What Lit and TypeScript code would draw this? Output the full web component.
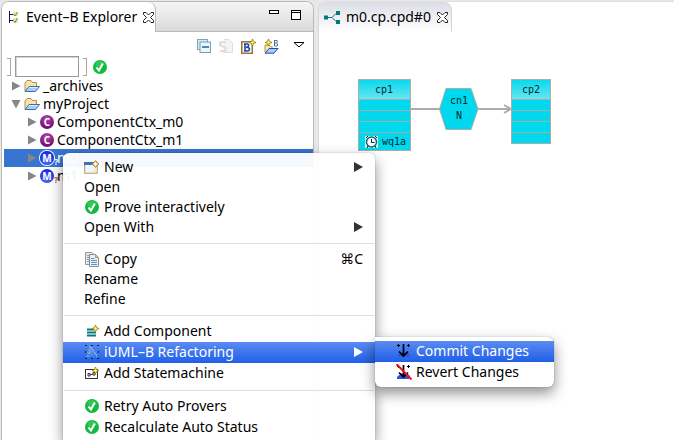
import { LitElement, html, svg, css, nothing, TemplateResult } from "lit";
import { customElement } from "lit/decorators.js";
import { classMap } from "lit/directives/class-map.js";

const icon = (w: number, h: number, body: unknown) => html`
  <svg class="ico" width=${w} height=${h} viewBox="0 0 ${w} ${h}" aria-hidden="true">${body}</svg>`;

const check = () => icon(14, 14, svg`
  <circle cx="7" cy="7" r="7" fill="#12b93c"></circle>
  <ellipse cx="7" cy="4" rx="5" ry="3" fill="#4fd46e" opacity=".5"></ellipse>
  <path d="M3.5 7.5 L6 10.5 L9.8 3.5" fill="none" stroke="#fff" stroke-width="2"></path>`);

const folder = () => icon(16, 14, svg`
  <path d="M1 12 V4 L3 1.5 H7 L8.500 3.500 H12.500 V7" fill="#f9e2ab" stroke="#b08d4f"></path>
  <path d="M1 12.500 L5 7.500 H15.500 L11.500 12.500 Z" fill="#a9cdf5" stroke="#3f6cae"></path>
  <path d="M5 8.500 H13.500" stroke="#dcedff"></path>`);

const close = () => icon(11, 11, svg`
  <path d="M.5 .5 H3 L5.500 3 L8 .5 H10.500 V2.500 L7.500 5.500 L10.500 8.500 V10.500 H8 L5.500 8 L3 10.500 H.5 V8.500 L3.500 5.500 L.5 2.500 Z"
    fill="#fff" stroke="#222"></path>`);

const star = (x: number, y: number) => svg`
  <path d="M${x} ${y - 3.5} L${x + 1} ${y - 1} L${x + 3.5} ${y} L${x + 1} ${y + 1} L${x} ${y + 3.5} L${x - 1} ${y + 1} L${x - 3.5} ${y} L${x - 1} ${y - 1} Z"
    fill="#fff45a" stroke="#8b7a12" stroke-width=".8"></path>`;

const letterBall = (letter: string, kind: string) => html`<span class="ball ${kind}">${letter}</span>`;

const explorerIcon = () => icon(12, 14, svg`
  <path d="M1.500 1 V13 M1.500 4.500 H5 M1.500 10.500 H5" fill="none" stroke="#13136b"></path>
  <rect x="5" y="2" width="5" height="4" fill="#f5dfa0"></rect>
  <rect x="5" y="8" width="5" height="5" fill="#f5dfa0"></rect>
  <path d="M5.500 4 L7 6 L9.500 2 M5.500 10.500 L7 12.500 L9.500 8" fill="none" stroke="#3faa4a"></path>`);

const diagramIcon = () => icon(16, 13, svg`
  <path d="M4 6.500 H8 L12 2.500 M8 6.500 L12 10.500" fill="none" stroke="#007b7b"></path>
  <path d="M0 4.500 H4 V8.500 H0 Z M12 0 H16 V4 H12 Z M12 9 H16 V13 H12 Z" fill="#007b7b"></path>`);

const collapseIcon = () => icon(14, 14, svg`
  <rect x=".5" y=".5" width="10" height="10" fill="#d5eaf5" stroke="#7fa3b8"></rect>
  <rect x="3" y="3" width="10.500" height="10.500" fill="#e9f7fd" stroke="#7c9cb5"></rect>
  <path d="M5 8 H12" stroke="#1d5f9c" stroke-width="1.500"></path>`);

const linkIcon = () => icon(14, 14, svg`
  <path d="M5 .5 H10 L13.500 4 V13.500 H4" fill="#f4f4f4" stroke="#dedede"></path>
  <path d="M7 3 L1 3.500 L1 6 L7 9 M1 12 L6 12 L7 9" fill="none" stroke="#dcdcdc" stroke-width="2"></path>`);

const newBIcon = () => icon(15, 15, svg`
  <rect x=".8" y="2.800" width="10.500" height="11.500" fill="#fffbea" stroke="#96753a" stroke-width="1.500"></rect>
  <path d="M4 5 V12 M3 5 H6.500 Q8 5.500 7.500 7 Q7 8.300 5 8.300 Q8.500 8.300 8.500 10 Q8.500 12 6 12 H3" fill="none" stroke="#1d46b5" stroke-width="1.600"></path>
  ${star(11.5, 3.5)}`);

const newProjectIcon = () => icon(15, 15, svg`
  <path d="M1 13 V6 H5 L7 8 H9" fill="#fbe6ae" stroke="#c09038"></path>
  <path d="M1 14.200 L5 9.500 H14 L10 14.200 Z" fill="#a8ccf7" stroke="#2c4aa0"></path>
  <path d="M10.500 1 V7 M10.500 1.500 H13 Q14 3.500 12.500 4 H10.500 M12.500 4 Q15 6.500 13 7 H10.500" fill="none" stroke="#3b7bab"></path>
  ${star(4.5, 3.5)}`);

const newIcon = () => icon(16, 14, svg`
  <rect x=".7" y="2.700" width="12.500" height="10.500" fill="#eef7fc" stroke="#ab9664" stroke-width="1"></rect>
  <rect x="0" y="2" width="10" height="3" fill="#3d77b3"></rect>
  <path d="M12 6 Q11 12 4 12.500 H12.500 Z" fill="#fbe6b8"></path>
  <path d="M11.500 .8 L14.800 4 L11.500 7.200 L8.200 4 Z" fill="#f4cf79" stroke="#a5762c"></path>
  <path d="M11.500 2 V6 M9.500 4 H13.500" stroke="#fff"></path>`);

const copyIcon = () => icon(14, 15, svg`
  <path d="M.5 .5 H7 L9.500 3 V12.500 H.5 Z" fill="#dcebf7" stroke="#a29871"></path>
  <path d="M2 3.500 H6 M2 5.500 H4 M2 7.500 H4 M2 9.500 H4" stroke="#7da1c6"></path>
  <path d="M4.500 2.500 H10.500 L13.500 5.500 V14.500 H4.500 Z" fill="#e8f3fb" stroke="#8a8f86"></path>
  <path d="M10.500 2.500 V5.500 H13.500 Z" fill="#e8ca8c" stroke="#b59753"></path>
  <path d="M6 6.500 H9.500 M6 8.500 H12 M6 10.500 H12 M6 12.500 H12" stroke="#658fbd"></path>`);

const componentIcon = () => icon(13, 12, svg`
  <path d="M1 4.500 H8 M1 7.500 H10 M1 10.500 H10" stroke="#0b7a7a" stroke-width="2"></path>
  ${star(9.5, 3.5)}`);

const refactorIcon = () => icon(14, 14, svg`
  <path d="M2 12 L5 2 L8 7 L12 12 M4 12 L5 6 L8 12 M6 2 L12 10" fill="none" stroke="#7fb0d8" stroke-width="1.300" stroke-dasharray="2 1"></path>
  <path d="M0 0 H2 V1 H0 Z M12 0 H14 V1 H12 Z M0 13 H2 V14 H0 Z M12 13 H14 V14 H12 Z M0 6 H1 V8 H0 Z M13 6 H14 V8 H13 Z M6 0 H8 V1 H6 Z M6 13 H8 V14 H6 Z" fill="#123"></path>`);

const stateIcon = () => icon(14, 13, svg`
  <rect x=".5" y="2.500" width="12" height="9" fill="#fff" stroke="#333"></rect>
  <path d="M3 6.500 H5 V9 H3 Z M8 5.500 H10 V8 H8 Z M5 8 L8 7" fill="#fff" stroke="#333"></path>
  ${star(10.500, 3.500)}`);

const commitIcon = (struck: boolean) => icon(16, 16, svg`
  <path d="M2 12 L5 9.500 H11 L14 12 V13.500 H2 Z" fill="#2d52e0"></path>
  ${struck ? svg`<path d="M1 12.500 H13 V15 H1 Z" fill="#2d52e0"></path>` : nothing}
  <path d="M7.500 1 V13 M3 8.500 L7.500 13 L12 8.500" fill="none" stroke="#000" stroke-width="1.700"></path>
  <path d="M1 2.500 H4 M2.500 1 V4 M11 2.500 H14 M12.500 1 V4" stroke="#000"></path>
  ${struck ? svg`<path d="M.5 0 L15.500 15.500" stroke="#f01020" stroke-width="2"></path>` : nothing}`);

const arrow = () => html`<svg class="arrow" width="9" height="10" viewBox="0 0 9 10" aria-hidden="true"><path d="M0 0 L9 5 L0 10 Z" fill="currentColor"></path></svg>`;

const twisty = (open: boolean) => icon(10, 10, open
  ? svg`<path d="M.5 1 H9.500 L5 9.500 Z" fill="#868686"></path>`
  : svg`<path d="M1 .5 L9.500 5 L1 9.500 Z" fill="#868686"></path>`);

interface Item { label: string; icon?: () => TemplateResult; sub?: boolean; key?: string; on?: boolean; }

const groups: Item[][] = [
  [{ label: "New", icon: newIcon, sub: true }, { label: "Open" }, { label: "Prove interactively", icon: check }, { label: "Open With", sub: true }],
  [{ label: "Copy", icon: copyIcon, key: "⌘C" }, { label: "Rename" }, { label: "Refine" }],
  [{ label: "Add Component", icon: componentIcon }, { label: "iUML–B Refactoring", icon: refactorIcon, sub: true, on: true }, { label: "Add Statemachine", icon: stateIcon }],
  [{ label: "Retry Auto Provers", icon: check }, { label: "Recalculate Auto Status", icon: check }],
];

const submenu: Item[] = [
  { label: "Commit Changes", icon: () => commitIcon(false), on: true },
  { label: "Revert Changes", icon: () => commitIcon(true) },
];

const tree = [
  { label: "_archives", depth: 0, open: false, icon: folder },
  { label: "myProject", depth: 0, open: true, icon: folder },
  { label: "ComponentCtx_m0", depth: 1, open: false, icon: () => letterBall("C", "context-ball") },
  { label: "ComponentCtx_m1", depth: 1, open: false, icon: () => letterBall("C", "context-ball") },
  { label: "m0", depth: 1, open: false, icon: () => letterBall("M", "machine-ball"), mark: true, selected: true },
  { label: "m1", depth: 1, open: false, icon: () => letterBall("M", "machine-ball"), mark: true },
];

@customElement("app-root")
export class AppRoot extends LitElement {
  static styles = css`
    :host { display: block; position: relative; min-height: 100vh; overflow: hidden; background: #e8e8e8;
      font: 14px/18px "Noto Sans", "Open Sans", sans-serif; color: #000; }
    * { box-sizing: border-box; }
    button, input { font: inherit; color: inherit; margin: 0; padding: 0; border: 0; background: none; }
    svg { flex: none; display: block; }
    .window { display: grid; grid-template-columns: 314px minmax(0, 1fr); gap: 4px; height: 100vh; padding-top: 1px; overflow: hidden; }
    .pane { display: flex; flex-direction: column; border: 1px solid #b9b9b9; border-bottom: 0; border-radius: 8px 8px 0 0; background: #fff; overflow: hidden; }
    .explorer { margin-left: 1px; }
    .editor { border-right: 0; border-top-color: #e0e0e0; border-left-color: #d8d8dc; border-radius: 8px 0 0 0; }
    .tabs { display: flex; height: 30px; flex: none; }
    .explorer .tabs { background: linear-gradient(#f5f5f5, #dadada); border-bottom: 1px solid #b3b9c6; }
    .tab { display: flex; align-items: center; white-space: nowrap; }
    .explorer .tab { width: 154px; height: 30px; gap: 6px; padding-left: 6px; background: #fff; border-right: 1px solid #b3b9c6; border-radius: 0 8px 0 0; }
    .editor .tab { width: 133px; gap: 6px; padding-left: 5px; background: linear-gradient(#dcdce6, #fff); border-right: 1px solid #d4d4d8; border-radius: 0 8px 0 0; }
    .grow { flex: 1; }
    .sizers { display: flex; gap: 12px; padding: 7px 12px 0 0; }
    .tools { display: flex; gap: 8px; align-items: center; justify-content: flex-end; height: 24px; flex: none; padding: 4px 8px 0 0; }
    .tools .last { margin-left: 6px; }
    .tools button { height: 16px; }
    .search { display: flex; gap: 4px; align-items: center; height: 21px; flex: none; padding-left: 5px; }
    .search input { width: 64px; height: 21px; border: 1px solid #999; box-shadow: inset 1px 1px #d5d5d5; background: #fff; }
    .bracket { width: 4px; height: 18px; border: 1px solid #a8a8a8; border-left: 0; }
    .search .ico { margin-left: 2px; }
    .row { display: flex; align-items: center; gap: 3px; height: 18px; padding-left: 9px; white-space: nowrap; }
    .row.child { padding-left: 25px; }
    .row.selected { color: #fff; margin-left: 2px; padding-left: 23px; background: #3875d0; }
    .tree { padding: 0; margin: 0; list-style: none; }
    .ball { width: 14px; height: 14px; border-radius: 7px; color: #fff; font: bold 10px/14px "Noto Sans", sans-serif; text-align: center; }
    .context-ball { background: radial-gradient(circle at 50% 25%, #b04aa8, #7b0f78 70%); }
    .machine-ball { background: radial-gradient(circle at 50% 75%, #4b6cff, #1a2fe0 70%); }
    .selected .ball { box-shadow: 0 0 0 1px #fff; }
    .mark { font: bold 9px/10px "Noto Sans", sans-serif; color: #b5532a; align-self: flex-end; width: 0; margin-left: -3px; }
    .selected .mark { color: #fff; }
    .canvas { position: relative; flex: 1; }
    .diagram { position: absolute; left: 39px; top: 47px; font: 10px "DejaVu Sans Mono", monospace; }
    .menu { position: absolute; background: rgba(255, 255, 255, .95); box-shadow: 0 6px 14px rgba(0, 0, 0, .45), 0 0 1px rgba(0, 0, 0, .5); }
    .context { left: 63px; top: 153px; bottom: 0; width: 312px; padding-top: 4px; border-radius: 6px 6px 0 0; }
    .sub { left: 375px; top: 337px; width: 179px; padding: 4px 0; border-radius: 0 6px 6px 6px; background: #fff; }
    .item { display: flex; align-items: center; width: 100%; height: 20px; padding: 0 12px 0 21px; gap: 4px; text-align: left; white-space: nowrap; }
    .tall .item { height: 21px; padding-bottom: 1px; }
    .item.on { color: #fff; background: linear-gradient(#5b8bf2, #1f5fe8); }
    .slot { display: flex; width: 16px; justify-content: center; }
    .arrow { color: #333; }
    .on .arrow { color: #fff; }
    .item .key { font-family: "Noto Sans", "DejaVu Sans", sans-serif; }
    .rule { height: 1px; margin: 6px 1px 5px; border: 0; background: #dedede; }
  `;

  private item(i: Item) {
    return html`<button role="menuitem" class=${classMap({ item: true, on: !!i.on })}>
      ${i.icon ? html`<span class="slot">${i.icon()}</span>` : nothing}
      <span>${i.label}</span><span class="grow"></span>
      ${i.key ? html`<span class="key">${i.key}</span>` : nothing}${i.sub ? arrow() : nothing}
    </button>`;
  }

  private diagram() {
    return html`<svg class="diagram" width="194" height="74" viewBox="0 0 194 74" role="img" aria-label="Component diagram">
      <defs><linearGradient id="head" x1="0" y1="0" x2="0" y2="1"><stop offset="0" stop-color="#06d9ec"></stop><stop offset="1" stop-color="#69e6f2"></stop></linearGradient></defs>
      <g stroke="#acacac" fill="#00d9ed">
        <path d="M52 30 H82 M120 30 H152" stroke-width="2"></path>
        <path d="M146 26 L153 30 L146 34" fill="none" stroke-width="2"></path>
        <rect x=".5" y=".5" width="52" height="71"></rect>
        <rect x=".5" y=".5" width="52" height="20" fill="url(#head)"></rect>
        <path d="M1 31.500 H52 M1 42.500 H52 M1 53.500 H52"></path>
        <rect x="153.500" y=".5" width="39" height="64"></rect>
        <rect x="153.500" y=".5" width="39" height="20" fill="url(#head)"></rect>
        <path d="M154 31.500 H192 M154 42.500 H192 M154 53.500 H192"></path>
        <path d="M88 9.500 H113 L120 30 L113 50.500 H88 L81.500 30 Z"></path>
      </g>
      <rect x="7" y="57" width="13" height="12" fill="#d6f3f5"></rect>
      <circle cx="13.500" cy="63" r="5" fill="#fff" stroke="#046b78" stroke-width="1.500"></circle>
      <path d="M13.500 60 V63.500 H16.500 M8 59 L10 57 M17 57 L19 59 M9 69 L10 67 M18 69 L17 67" fill="none" stroke="#023"></path>
      <g fill="#042a30">
        <text x="26" y="14" text-anchor="middle">cp1</text>
        <text x="173" y="14" text-anchor="middle">cp2</text>
        <text x="101" y="25" text-anchor="middle">cn1</text>
        <text x="101" y="40" text-anchor="middle">N</text>
        <text x="24" y="66">wq1a</text>
      </g>
    </svg>`;
  }

  render() {
    return html`
      <div class="window">
        <section class="pane explorer">
          <div class="tabs">
            <div class="tab">${explorerIcon()}<span>Event–B Explorer</span>${close()}</div>
            <span class="grow"></span>
            <div class="sizers">
              ${icon(10, 11, svg`<rect x=".5" y="1.500" width="9" height="3" fill="#fff" stroke="#000"></rect>`)}
              ${icon(10, 11, svg`<rect x=".5" y="1.500" width="9" height="9" fill="#fff" stroke="#000"></rect><path d="M0 3.500 H10" stroke="#000"></path>`)}
            </div>
          </div>
          <div class="tools">
            <button aria-label="Collapse all">${collapseIcon()}</button>
            <button aria-label="Link with editor">${linkIcon()}</button>
            <button aria-label="New component">${newBIcon()}</button>
            <button aria-label="New project">${newProjectIcon()}</button>
            <button class="last" aria-label="View menu">${icon(12, 10, svg`<path d="M1 1.500 H11 L6 6 Z" fill="#fff" stroke="#000"></path>`)}</button>
          </div>
          <div class="search">
            <span class="bracket"></span><input type="text" aria-label="Filter"><span class="bracket"></span>${check()}
          </div>
          <ul class="tree">
            ${tree.map((n) => html`<li class=${classMap({ row: true, child: n.depth > 0, selected: !!n.selected })}>
              ${twisty(n.open)}${n.icon()}${n.mark ? html`<span class="mark">?</span>` : nothing}<span>${n.label}</span></li>`)}
          </ul>
        </section>
        <section class="pane editor">
          <div class="tabs"><div class="tab">${diagramIcon()}<span>m0.cp.cpd#0</span>${close()}</div></div>
          <div class="canvas">${this.diagram()}</div>
        </section>
      </div>
      <div class="menu context" role="menu">
        ${groups.map((g, n) => html`${n ? html`<hr class="rule">` : nothing}
          <div class=${classMap({ tall: n > 1 })}>${g.map((i) => this.item(i))}</div>`)}
      </div>
      <div class="menu sub tall" role="menu">${submenu.map((i) => this.item(i))}</div>
    `;
  }
}
